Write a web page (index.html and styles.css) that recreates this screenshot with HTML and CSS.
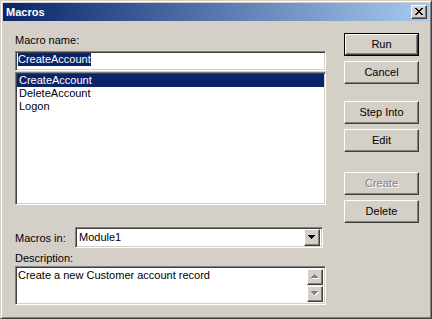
FILE: index.html
```html
<!DOCTYPE html>
<html lang="en">
<head>
    <meta charset="UTF-8">
    <title>Macros</title>
    <link rel="stylesheet" href="styles.css">
</head>
<body>
<div class="window">
    <div class="titlebar">
        <span class="title">Macros</span>
        <span class="close-btn">
            <svg width="8" height="7" viewBox="0 0 8 7" shape-rendering="crispEdges">
                <path d="M0 0h2v1h-2zM6 0h2v1h-2zM1 1h2v1h-2zM5 1h2v1h-2zM2 2h4v1h-4zM3 3h2v1h-2zM2 4h4v1h-4zM1 5h2v1h-2zM5 5h2v1h-2zM0 6h2v1h-2zM6 6h2v1h-2z" fill="#000"/>
            </svg>
        </span>
    </div>
    <div class="dialog">
        <div class="main">
            <div class="label">Macro name:</div>
            <div class="sunken name-field"><span class="highlight">CreateAccount</span></div>
            <ul class="sunken listbox">
                <li class="item selected">CreateAccount</li>
                <li class="item">DeleteAccount</li>
                <li class="item">Logon</li>
            </ul>
            <div class="macros-in">
                <span class="macros-label">Macros in:</span>
                <div class="sunken combo">
                    <span class="combo-value">Module1</span>
                    <span class="raised combo-btn">
                        <svg width="7" height="4" viewBox="0 0 7 4" shape-rendering="crispEdges">
                            <path d="M0 0h7v1h-7zM1 1h5v1h-5zM2 2h3v1h-3zM3 3h1v1h-1z" fill="#000"/>
                        </svg>
                    </span>
                </div>
            </div>
            <div class="label desc-label">Description:</div>
            <div class="sunken desc">
                <div class="desc-text">Create a new Customer account record</div>
                <div class="vscroll">
                    <span class="raised scroll-btn">
                        <svg width="8" height="5" viewBox="0 0 8 5" shape-rendering="crispEdges">
                            <path d="M4 1h1v1h-1zM3 2h3v1h-3zM2 3h5v1h-5zM1 4h7v1h-7z" fill="#fff"/>
                            <path d="M3 0h1v1h-1zM2 1h3v1h-3zM1 2h5v1h-5zM0 3h7v1h-7z" fill="#808080"/>
                        </svg>
                    </span>
                    <span class="track"></span>
                    <span class="raised scroll-btn">
                        <svg width="8" height="5" viewBox="0 0 8 5" shape-rendering="crispEdges">
                            <path d="M1 1h7v1h-7zM2 2h5v1h-5zM3 3h3v1h-3zM4 4h1v1h-1z" fill="#fff"/>
                            <path d="M0 0h7v1h-7zM1 1h5v1h-5zM2 2h3v1h-3zM3 3h1v1h-1z" fill="#808080"/>
                        </svg>
                    </span>
                </div>
            </div>
        </div>
        <div class="buttons">
            <div class="default-frame"><span class="raised btn">Run</span></div>
            <span class="raised btn">Cancel</span>
            <span class="raised btn group-start">Step Into</span>
            <span class="raised btn">Edit</span>
            <span class="raised btn disabled group-start2">Create</span>
            <span class="raised btn">Delete</span>
        </div>
    </div>
</div>
</body>
</html>
```

FILE: styles.css
```css
* {
    box-sizing: border-box;
}

body {
    margin: 0;
    font-family: "Liberation Sans", Arial, sans-serif;
    font-size: 11px;
    color: #000;
}

.window {
    width: 432px;
    height: 319px;
    background-color: #d4d0c8;
    border-top: 1px solid #d4d0c8;
    border-left: 1px solid #d4d0c8;
    border-right: 1px solid #404040;
    border-bottom: 1px solid #404040;
    box-shadow: inset 1px 1px #fff, inset -1px -1px #808080;
    padding: 2px;
}

.titlebar {
    height: 18px;
    background: linear-gradient(to right, #0a246a, #a6caf0);
    display: flex;
    align-items: center;
    justify-content: space-between;
    padding: 0 2px 0 3px;
}

.title {
    color: #fff;
    font-weight: bold;
    font-size: 11px;
}

.close-btn {
    width: 16px;
    height: 14px;
    background-color: #d4d0c8;
    border-top: 1px solid #fff;
    border-left: 1px solid #fff;
    border-right: 1px solid #404040;
    border-bottom: 1px solid #404040;
    box-shadow: inset -1px -1px #808080;
    display: flex;
    align-items: center;
    justify-content: center;
    padding: 0 1px 1px 0;
}

.dialog {
    display: flex;
    padding: 0 0 0 12px;
}

.main {
    width: 311px;
    padding-top: 13px;
}

.label {
    height: 13px;
    line-height: 13px;
    margin-bottom: 4px;
}

.sunken {
    background-color: #fff;
    border-top: 1px solid #808080;
    border-left: 1px solid #808080;
    border-right: 1px solid #fff;
    border-bottom: 1px solid #fff;
    box-shadow: inset 1px 1px #404040, inset -1px -1px #d4d0c8;
    padding: 1px;
}

.raised {
    background-color: #d4d0c8;
    border-top: 1px solid #fff;
    border-left: 1px solid #fff;
    border-right: 1px solid #404040;
    border-bottom: 1px solid #404040;
    box-shadow: inset -1px -1px #808080;
    display: flex;
    align-items: center;
    justify-content: center;
}

.name-field {
    height: 20px;
    padding-left: 2px;
    line-height: 13px;
}

.highlight {
    background-color: #0a246a;
    color: #fff;
    display: inline-block;
}

.listbox {
    list-style: none;
    margin: 1px 0 0;
    height: 133px;
    padding: 1px 1px 1px 1px;
}

.item {
    height: 13px;
    line-height: 13px;
    padding-left: 2px;
}

.selected {
    background-color: #0a246a;
    color: #fff;
}

.macros-in {
    display: flex;
    align-items: center;
    margin-top: 22px;
}

.macros-label {
    width: 60px;
}

.combo {
    width: 248px;
    height: 21px;
    display: flex;
    align-items: center;
    padding: 2px;
}

.combo-value {
    flex: 1;
    padding-left: 1px;
    line-height: 13px;
}

.combo-btn {
    width: 16px;
    height: 17px;
    padding: 0 1px 1px 0;
}

.desc-label {
    margin-top: 4px;
    margin-bottom: 1px;
}

.desc {
    height: 39px;
    display: flex;
    padding: 2px;
}

.desc-text {
    flex: 1;
    line-height: 13px;
    padding-left: 0;
}

.vscroll {
    width: 16px;
    display: flex;
    flex-direction: column;
}

.scroll-btn {
    width: 16px;
    height: 16px;
    padding: 0 1px 1px 0;
}

.track {
    flex: 1;
    background: repeating-conic-gradient(#fff 0 25%, #d4d0c8 0 50%) 0 0 / 2px 2px;
}

.buttons {
    width: 75px;
    margin-left: 18px;
    padding-top: 12px;
    display: flex;
    flex-direction: column;
    gap: 5px;
}

.btn {
    width: 75px;
    height: 23px;
    line-height: 13px;
}

.default-frame {
    width: 75px;
    height: 23px;
    border: 1px solid #000;
}

.default-frame .btn {
    width: 73px;
    height: 21px;
}

.group-start {
    margin-top: 12px;
}

.group-start2 {
    margin-top: 15px;
}

.disabled {
    color: #808080;
    text-shadow: 1px 1px #fff;
}
```
